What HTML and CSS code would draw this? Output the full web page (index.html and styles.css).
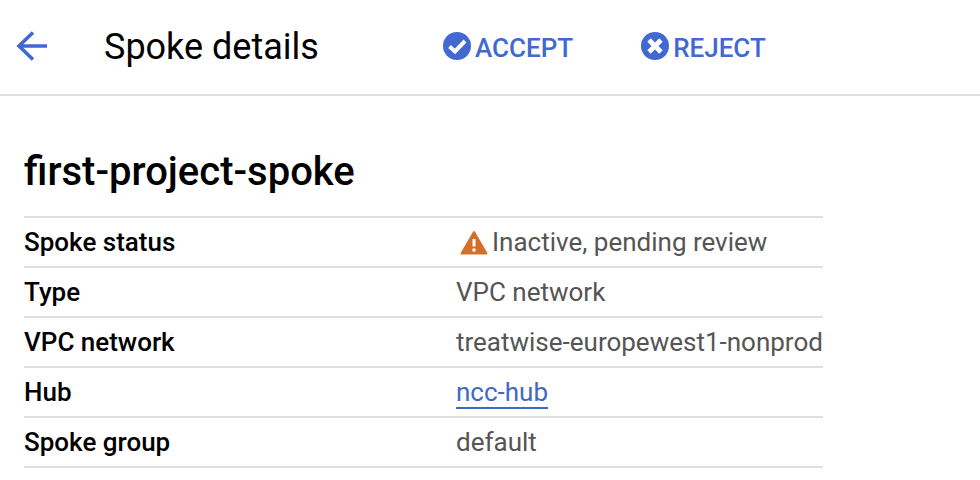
FILE: index.html
```html
<!DOCTYPE html>
<html lang="en">
<head>
  <meta charset="UTF-8">
  <title>Spoke details</title>
  <link rel="stylesheet" href="styles.css">
</head>
<body>
  <header class="toolbar">
    <a class="back" href="#" aria-label="Back">
      <svg width="34" height="34" viewBox="0 0 34 34"><path d="M32 17H4M18 3.500 4 17l14 13.500" fill="none" stroke="#4169d1" stroke-width="3.600"/></svg>
    </a>
    <h2 class="page-title">Spoke details</h2>
    <div class="actions">
      <button class="action action-accept">
        <svg width="28" height="28" viewBox="0 0 28 28"><circle cx="14" cy="14" r="14" fill="#4169d1"/><path d="M6.500 14.500l5.500 5 10-10.500" fill="none" stroke="#fff" stroke-width="4"/></svg>
        ACCEPT
      </button>
      <button class="action action-reject">
        <svg width="28" height="28" viewBox="0 0 28 28"><circle cx="14" cy="14" r="14" fill="#4169d1"/><path d="M8 8l12 12M20 8 8 20" fill="none" stroke="#fff" stroke-width="4.800"/></svg>
        REJECT
      </button>
    </div>
  </header>

  <main class="content">
    <h1 class="spoke-name">first-project-spoke</h1>
    <div class="details">
      <div class="row">
        <div class="label">Spoke status</div>
        <div class="value value-status">
          <svg width="28" height="25" viewBox="0 0 28 25"><path d="M14 2 26.500 23.500H1.500z" fill="#d2702a" stroke="#d2702a" stroke-width="2" stroke-linejoin="round"/><path d="M14 9v7.500M14 18.500v3" stroke="#fff" stroke-width="3"/></svg>
          Inactive, pending review
        </div>
      </div>
      <div class="row">
        <div class="label">Type</div>
        <div class="value">VPC network</div>
      </div>
      <div class="row">
        <div class="label">VPC network</div>
        <div class="value">treatwise-europewest1-nonprod</div>
      </div>
      <div class="row">
        <div class="label">Hub</div>
        <div class="value"><a class="link" href="#">ncc-hub</a></div>
      </div>
      <div class="row">
        <div class="label">Spoke group</div>
        <div class="value">default</div>
      </div>
    </div>
  </main>
</body>
</html>
```

FILE: styles.css
```css
body {
  margin: 0;
  font-family: Roboto, "Liberation Sans", sans-serif;
  background: #fff;
  color: #000;
}
.toolbar {
  display: flex;
  align-items: center;
  height: 94px;
  border-bottom: 2px solid #e0e0e0;
}
.back {
  display: flex;
  margin: 0 0 3px 15px;
}
.page-title {
  margin: 0 0 0 55px;
  font-size: 36px;
  font-weight: 400;
  width: 339px;
}
.actions {
  display: flex;
  gap: 68px;
  padding-top: 2px;
}
.action {
  display: flex;
  align-items: center;
  gap: 4px;
  padding: 0;
  border: none;
  background: none;
  color: #4169d1;
  font-family: inherit;
  font-size: 26px;
  font-weight: 500;
}
.action svg {
  margin-bottom: 4px;
}
.content {
  width: 799px;
  margin-left: 24px;
}
.spoke-name {
  margin: 54px 0 22px;
  font-size: 40px;
  line-height: 44px;
  font-weight: 500;
}
.details {
  border-top: 2px solid #e0e0e0;
}
.row {
  display: flex;
  align-items: center;
  height: 48px;
  border-bottom: 2px solid #e0e0e0;
  font-size: 26px;
}
.label {
  width: 432px;
  font-weight: 500;
}
.value {
  color: #555;
  white-space: nowrap;
}
.value-status {
  display: flex;
  align-items: center;
  gap: 4px;
  margin-left: 4px;
}
.link {
  color: #4169c4;
  text-decoration: none;
  border-bottom: 2px solid #4169c4;
}
```
